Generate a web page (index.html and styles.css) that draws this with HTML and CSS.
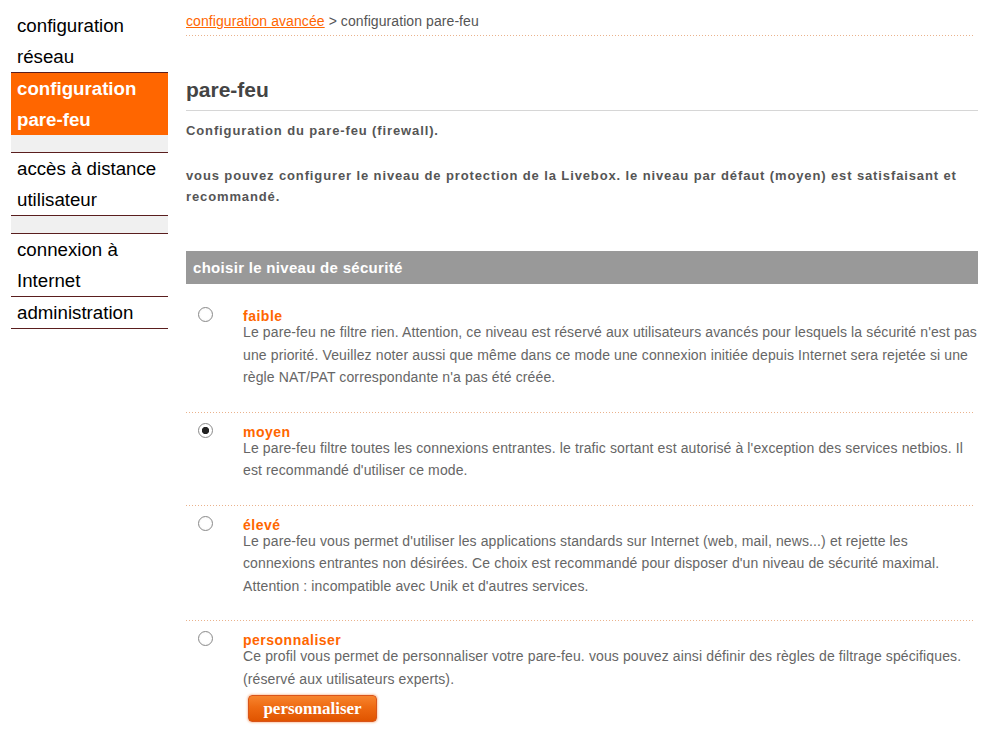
FILE: index.html
```html
<!DOCTYPE html>
<html lang="fr">
<head>
<meta charset="utf-8">
<title>configuration pare-feu</title>
<link rel="stylesheet" href="styles.css">
</head>
<body>
<div class="page">
  <nav class="sidebar">
    <a class="nav-item" href="#">configuration<br>réseau</a>
    <a class="nav-item active" href="#">configuration<br>pare-feu</a>
    <div class="nav-spacer"></div>
    <a class="nav-item" href="#">accès à distance<br>utilisateur</a>
    <div class="nav-spacer"></div>
    <a class="nav-item" href="#">connexion à<br>Internet</a>
    <a class="nav-item" href="#">administration</a>
  </nav>
  <main class="main">
    <div class="breadcrumb"><a href="#">configuration avancée</a> &gt; configuration pare-feu</div>
    <div class="dots"></div>
    <h1 class="title">pare-feu</h1>
    <p class="intro">Configuration du pare-feu (firewall).</p>
    <p class="intro intro-2">vous pouvez configurer le niveau de protection de la Livebox. le niveau par défaut (moyen) est satisfaisant et recommandé.</p>
    <div class="section-bar">choisir le niveau de sécurité</div>
    <div class="options">
      <label class="option first">
        <input class="radio" type="radio" name="level">
        <span class="option-body">
          <span class="option-title">faible</span>
          <span class="option-desc">Le pare-feu ne filtre rien. Attention, ce niveau est réservé aux utilisateurs avancés pour lesquels la sécurité n'est pas une priorité. Veuillez noter aussi que même dans ce mode une connexion initiée depuis Internet sera rejetée si une règle NAT/PAT correspondante n'a pas été créée.</span>
        </span>
      </label>
      <div class="dots"></div>
      <label class="option">
        <input class="radio" type="radio" name="level" checked>
        <span class="option-body">
          <span class="option-title">moyen</span>
          <span class="option-desc">Le pare-feu filtre toutes les connexions entrantes. le trafic sortant est autorisé à l'exception des services netbios. Il est recommandé d'utiliser ce mode.</span>
        </span>
      </label>
      <div class="dots"></div>
      <label class="option">
        <input class="radio" type="radio" name="level">
        <span class="option-body">
          <span class="option-title">élevé</span>
          <span class="option-desc">Le pare-feu vous permet d'utiliser les applications standards sur Internet (web, mail, news...) et rejette les connexions entrantes non désirées. Ce choix est recommandé pour disposer d'un niveau de sécurité maximal. Attention : incompatible avec Unik et d'autres services.</span>
        </span>
      </label>
      <div class="dots"></div>
      <div class="option last">
        <input class="radio" type="radio" name="level">
        <div class="option-body">
          <span class="option-title">personnaliser</span>
          <span class="option-desc">Ce profil vous permet de personnaliser votre pare-feu. vous pouvez ainsi définir des règles de filtrage spécifiques. (réservé aux utilisateurs experts).</span>
          <button class="btn" type="button">personnaliser</button>
        </div>
      </div>
    </div>
  </main>
</div>
</body>
</html>
```

FILE: styles.css
```css
html, body {
  margin: 0;
  padding: 0;
  background: #fff;
}

body {
  font-family: "Liberation Sans", Arial, sans-serif;
  color: #666;
}

.page {
  display: flex;
  align-items: flex-start;
}

/* sidebar */
.sidebar {
  width: 157px;
  margin: 10px 0 0 11px;
  display: flex;
  flex-direction: column;
  flex-shrink: 0;
}

.nav-item {
  display: block;
  padding-left: 6px;
  font-size: 18.7px;
  line-height: 31px;
  color: #000;
  text-decoration: none;
  border-bottom: 1px solid #5a1e1e;
}

.nav-item.active {
  background: #ff6600;
  color: #fff;
  font-weight: bold;
  border-bottom: none;
}

.nav-spacer {
  height: 17px;
  background: #f0f0f0;
  border-bottom: 1px solid #5a1e1e;
}

/* main */
.main {
  width: 792px;
  margin-left: 18px;
  padding-top: 12px;
}

.breadcrumb {
  font-size: 14px;
  line-height: 18px;
  letter-spacing: 0.08px;
  color: #555;
  padding-bottom: 5px;
}

.breadcrumb a {
  color: #ff6600;
  text-decoration: underline;
}

.dots {
  height: 1px;
  margin-right: 3px;
  background: repeating-linear-gradient(to right, #eab28c 0 1px, transparent 1px 3px);
}

.title {
  margin: 42px 0 0;
  padding-bottom: 8px;
  font-size: 21px;
  line-height: 24px;
  color: #444;
  font-weight: bold;
  border-bottom: 1px solid #d6d6d6;
}

.intro {
  margin: 9px 0 0;
  font-size: 13px;
  line-height: 21px;
  font-weight: bold;
  letter-spacing: 0.88px;
  color: #555;
}

.intro-2 {
  margin-top: 24px;
}

.section-bar {
  margin-top: 44px;
  height: 33px;
  line-height: 33px;
  padding-left: 7px;
  background: #999;
  color: #fff;
  font-size: 15px;
  font-weight: bold;
  letter-spacing: 0.3px;
}

/* options */
.option {
  display: flex;
  align-items: flex-start;
  padding: 11px 0 23px 12px;
}

.option.first {
  margin-top: 13px;
}

.option.last {
  padding-bottom: 10px;
}

.radio {
  appearance: none;
  -webkit-appearance: none;
  width: 15px;
  height: 15px;
  margin: -1px 30px 0 0;
  border: 1px solid #8a8a8a;
  border-radius: 50%;
  background: radial-gradient(circle, #fff 0 50%, #eee 100%);
  flex-shrink: 0;
}

.radio:checked {
  background: radial-gradient(circle, #222 0 3.3px, #fff 4px);
}

.option-body {
  display: flex;
  flex-direction: column;
  align-items: flex-start;
}

.option-title {
  color: #ff6600;
  font-size: 14px;
  line-height: 16px;
  font-weight: bold;
  letter-spacing: 0.5px;
}

.option-desc {
  margin-top: -3px;
  font-size: 14px;
  line-height: 22.5px;
  letter-spacing: 0.12px;
  color: #666;
}

.btn {
  margin: 5px 0 0 5px;
  width: 129px;
  height: 27px;
  padding: 0;
  border: 1px solid #d9541a;
  border-radius: 4px;
  background: linear-gradient(#f7842e, #ee6a12 45%, #e05400);
  box-shadow: 0 0 2px 1px rgba(245, 170, 120, 0.6);
  color: #fff;
  font-family: "Liberation Serif", "Times New Roman", serif;
  font-size: 17px;
  font-weight: bold;
  cursor: pointer;
}
```
